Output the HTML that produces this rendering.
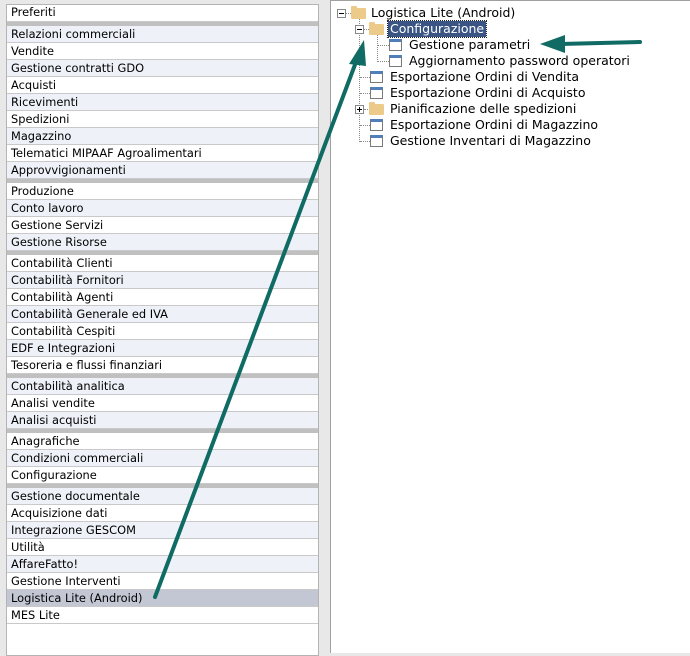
<!DOCTYPE html>
<html><head><meta charset="utf-8"><style>
*{margin:0;padding:0;box-sizing:border-box}
body{width:690px;height:653px;background:#e8e8e8;position:relative;overflow:hidden;font-family:"DejaVu Sans","Liberation Sans",sans-serif}
#left{position:absolute;left:6px;top:4px;width:313px;height:652px;background:#fff;border:1px solid #b4b4b4;border-top:none}
.r{height:17px;border-bottom:1px solid #c9c9c9;font-size:11.4px;line-height:16px;padding-left:4px;color:#000;white-space:nowrap}
.l{background:#eef2f8}
.s{height:4px;background:#c0c0c0}
.sel{background:#c3c6d3}
#right{position:absolute;left:330px;top:0;width:360px;height:653px;background:#fff;border-left:1px solid #a0a0a0;border-top:1px solid #a0a0a0}
.t{position:absolute;font-size:12.5px;line-height:16px;white-space:nowrap;color:#000}
.pm{position:absolute;width:9px;height:9px;border:1px solid #888;background:#fff}
.pm:before{content:"";position:absolute;left:1px;top:3px;width:5px;height:1px;background:#000}
.pm.p:after{content:"";position:absolute;left:3px;top:1px;width:1px;height:5px;background:#000}
.f{position:absolute;width:15px;height:11px;background:#eccb8a;border-radius:1px}
.f:before{content:"";position:absolute;left:0;top:-2px;width:6px;height:3px;background:#eccb8a;border-radius:1px 1px 0 0}
.d{position:absolute;width:13px;height:12px;border:1px solid #7a7a7a;border-top:3px solid #4f7fb8;background:#fff}
.hd{position:absolute;height:1px;border-top:1px dotted #888}
.vd{position:absolute;width:1px;border-left:1px dotted #888}
</style></head><body>
<div id="left">
<div class="r" style="height:18px;border-top:1px solid #b4b4b4;line-height:15px">Preferiti</div>
<div class="s"></div>
<div class="r l">Relazioni commerciali</div>
<div class="r">Vendite</div>
<div class="r l">Gestione contratti GDO</div>
<div class="r">Acquisti</div>
<div class="r l">Ricevimenti</div>
<div class="r">Spedizioni</div>
<div class="r l">Magazzino</div>
<div class="r">Telematici MIPAAF Agroalimentari</div>
<div class="r l">Approvvigionamenti</div>
<div class="s"></div>
<div class="r">Produzione</div>
<div class="r l">Conto lavoro</div>
<div class="r">Gestione Servizi</div>
<div class="r l">Gestione Risorse</div>
<div class="s"></div>
<div class="r">Contabilità Clienti</div>
<div class="r l">Contabilità Fornitori</div>
<div class="r">Contabilità Agenti</div>
<div class="r l">Contabilità Generale ed IVA</div>
<div class="r">Contabilità Cespiti</div>
<div class="r l">EDF e Integrazioni</div>
<div class="r">Tesoreria e flussi finanziari</div>
<div class="s"></div>
<div class="r l">Contabilità analitica</div>
<div class="r">Analisi vendite</div>
<div class="r l">Analisi acquisti</div>
<div class="s"></div>
<div class="r">Anagrafiche</div>
<div class="r l">Condizioni commerciali</div>
<div class="r">Configurazione</div>
<div class="s"></div>
<div class="r l">Gestione documentale</div>
<div class="r">Acquisizione dati</div>
<div class="r l">Integrazione GESCOM</div>
<div class="r">Utilità</div>
<div class="r l">AffareFatto!</div>
<div class="r">Gestione Interventi</div>
<div class="r sel">Logistica Lite (Android)</div>
<div class="r">MES Lite</div>
</div>
<div id="right"></div>
<div class="vd" style="left:359px;top:18px;height:124px"></div>
<div class="vd" style="left:377px;top:34px;height:28px"></div>
<div class="hd" style="left:346px;top:13px;width:5px"></div>
<div class="hd" style="left:364px;top:29px;width:5px"></div>
<div class="hd" style="left:378px;top:45px;width:11px"></div>
<div class="hd" style="left:378px;top:61px;width:11px"></div>
<div class="hd" style="left:360px;top:77px;width:10px"></div>
<div class="hd" style="left:360px;top:93px;width:10px"></div>
<div class="hd" style="left:364px;top:109px;width:6px"></div>
<div class="hd" style="left:360px;top:125px;width:10px"></div>
<div class="hd" style="left:360px;top:141px;width:10px"></div>
<div class="pm" style="left:337px;top:9px"></div>
<div class="f" style="left:351px;top:8px"></div>
<div class="t" style="left:371px;top:5px">Logistica Lite (Android)</div>
<div class="pm" style="left:355px;top:25px"></div>
<div class="f" style="left:369px;top:24px"></div>
<div class="t" style="left:388px;top:21px;background:#3a5584;color:#fff;padding:0 2px;outline:1px dotted #222">Configurazione</div>
<div class="d" style="left:389px;top:39px"></div>
<div class="t" style="left:409px;top:37px">Gestione parametri</div>
<div class="d" style="left:389px;top:55px"></div>
<div class="t" style="left:409px;top:53px">Aggiornamento password operatori</div>
<div class="d" style="left:370px;top:71px"></div>
<div class="t" style="left:390px;top:69px">Esportazione Ordini di Vendita</div>
<div class="d" style="left:370px;top:87px"></div>
<div class="t" style="left:390px;top:85px">Esportazione Ordini di Acquisto</div>
<div class="pm p" style="left:355px;top:105px"></div>
<div class="f" style="left:369px;top:104px"></div>
<div class="t" style="left:390px;top:101px">Pianificazione delle spedizioni</div>
<div class="d" style="left:370px;top:119px"></div>
<div class="t" style="left:390px;top:117px">Esportazione Ordini di Magazzino</div>
<div class="d" style="left:370px;top:135px"></div>
<div class="t" style="left:390px;top:133px">Gestione Inventari di Magazzino</div>
<svg style="position:absolute;left:0;top:0" width="690" height="653">
<line x1="155" y1="597" x2="356" y2="62" stroke="#0f6b63" stroke-width="4" stroke-linecap="round"/>
<polygon points="364,40 349,64 366,66" fill="#0f6b63"/>
<line x1="640" y1="42" x2="560" y2="44" stroke="#0f6b63" stroke-width="4" stroke-linecap="round"/>
<polygon points="540,44 565,35 565,53" fill="#0f6b63"/>
</svg>
</body></html>
